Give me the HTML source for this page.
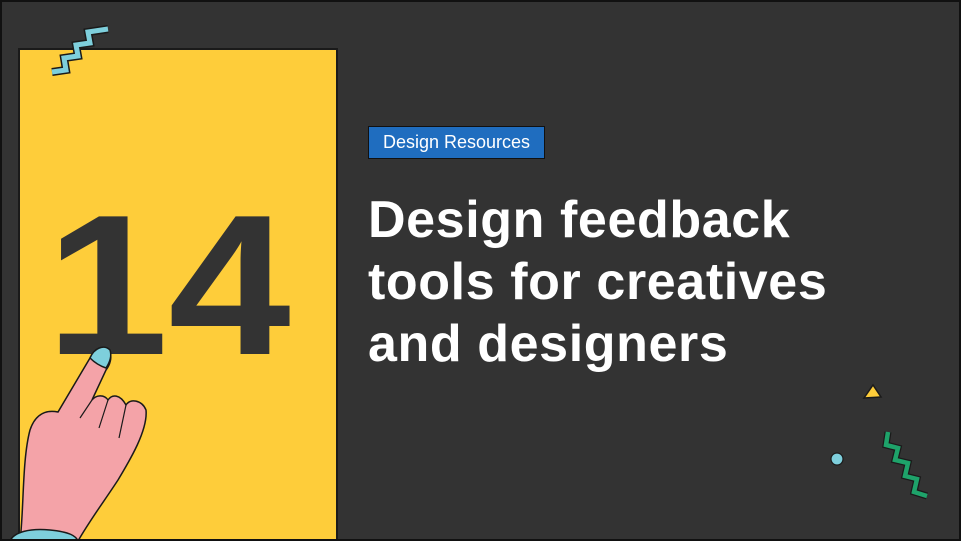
<!DOCTYPE html>
<html><head><style>
html,body{margin:0;padding:0;width:961px;height:541px;overflow:hidden;}
body{background:#333333;position:relative;font-family:"Liberation Sans",sans-serif;}
.frame{position:absolute;left:0;top:0;width:957px;height:537px;border:2px solid #111;}
.yellow{position:absolute;left:18px;top:48px;width:316px;height:500px;background:#fecd3a;border:2px solid #1a1a1a;}
.num{position:absolute;left:46px;top:186px;font-size:200px;font-weight:bold;color:#333;letter-spacing:0px;line-height:1;transform:scaleX(1.1);transform-origin:0 0;}
.tag{position:absolute;left:368px;top:126px;width:175px;height:31px;background:#1f6dbf;border:1px solid #111;color:#fff;font-size:18px;line-height:31px;text-align:center;}
.h{position:absolute;left:368px;top:189px;color:#fff;font-size:52px;font-weight:bold;line-height:62px;letter-spacing:0.6px;}
svg{position:absolute;left:0;top:0;}
</style></head><body>
<div class="yellow"></div>
<div class="num">14</div>
<div class="tag">Design Resources</div>
<div class="h">Design feedback<br>tools for creatives<br>and designers</div>
<svg width="961" height="541" viewBox="0 0 961 541">
<polyline points="52,72 66,70 64,58 78,56 76,45 90,43 88,32 108,29" fill="none" stroke="#1a1a1a" stroke-width="8" stroke-linejoin="miter"/>
<polyline points="52,72 66,70 64,58 78,56 76,45 90,43 88,32 108,29" fill="none" stroke="#7ecfdc" stroke-width="5" stroke-linejoin="miter"/>
<path d="M20,541 C24,510 22,460 30,430 C36,412 48,410 58,412 L90,358 C94,350 104,345 110,352 C112,358 110,365 106,370 L92,400 C96,395 104,394 108,400 C112,394 120,394 126,405 C130,398 142,400 146,410 C148,430 130,460 118,480 C105,500 90,520 78,541 Z" fill="#f4a3a8" stroke="#1a1a1a" stroke-width="1.5"/>
<path d="M90,358 C94,348 104,344 110,350 C112,356 110,362 106,368 C100,366 94,362 90,358 Z" fill="#7ecfdc" stroke="#1a1a1a" stroke-width="1.5"/>
<path d="M92,400 L80,418 M108,400 L99,428 M126,405 L119,438" stroke="#1a1a1a" stroke-width="1.2" fill="none"/>
<path d="M10,541 C14,532 30,528 50,530 C70,532 76,536 78,541 Z" fill="#7ecfdc" stroke="#1a1a1a" stroke-width="1.5"/>
<polygon points="864,398 873,385 881,397" fill="#fecd3a" stroke="#1a1a1a" stroke-width="1.5"/>
<circle cx="837" cy="459" r="6" fill="#7ecfdc" stroke="#1a1a1a" stroke-width="1.2"/>
<polyline points="888,432 886,445 898,448 895,460 908,463 905,476 917,479 914,492 927,496" fill="none" stroke="#1a1a1a" stroke-width="7"/>
<polyline points="888,432 886,445 898,448 895,460 908,463 905,476 917,479 914,492 927,496" fill="none" stroke="#1ea36a" stroke-width="4.5"/>
</svg>
<div class="frame"></div>
</body></html>
